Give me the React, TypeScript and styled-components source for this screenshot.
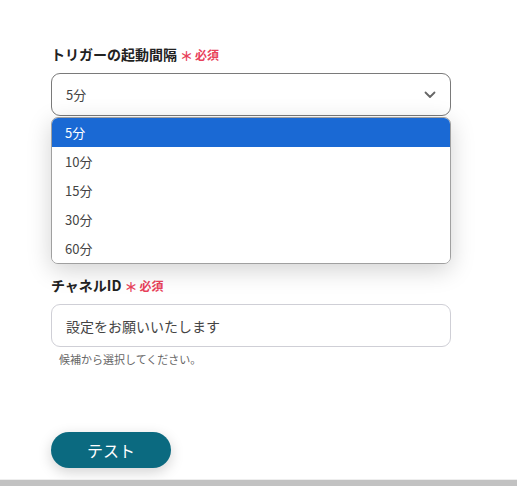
import React from "react";
import styled, { createGlobalStyle } from "styled-components";

const Global = createGlobalStyle`
  html, body { margin: 0; padding: 0; background: #fff; }
  body { font-family: "Noto Sans CJK JP", "Noto Sans", sans-serif; color: #333; }
`;

const Page = styled.div`
  width: 517px;
  height: 486px;
  display: flex;
  flex-direction: column;
  overflow: hidden;
`;

const Content = styled.div`
  flex: 1;
  padding: 44px 0 0 51px;
  display: flex;
  flex-direction: column;
`;

const Field = styled.div<{ $mb?: number }>`
  width: 400px;
  display: flex;
  flex-direction: column;
  position: relative;
  margin-bottom: ${(p) => p.$mb ?? 0}px;
`;

const Label = styled.div`
  display: flex;
  align-items: center;
  gap: 3px;
  font-size: 14px;
  font-weight: 700;
  color: #222;
  line-height: 21px;
  margin-bottom: 8px;
`;

const Required = styled.span`
  display: inline-flex;
  align-items: center;
  color: #e8415a;
  font-size: 12px;
  font-weight: 700;
  gap: 2px;
`;

const Star = styled.span`
  font-size: 13px;
  line-height: 1;
  margin-top: 2px;
`;

const Select = styled.div`
  height: 43px;
  box-sizing: border-box;
  border: 1px solid #7a7a7a;
  border-radius: 9px;
  display: flex;
  align-items: center;
  justify-content: space-between;
  padding: 0 14px 0 14px;
  font-size: 13px;
  color: #444;
  background: #fff;
`;

const Menu = styled.ul`
  position: absolute;
  left: 0;
  right: 0;
  top: 73px;
  margin: 0;
  padding: 0;
  list-style: none;
  background: #fff;
  border: 1px solid #a0a0a0;
  border-radius: 7px;
  overflow: hidden;
  box-shadow: 0 6px 24px rgba(0, 0, 0, 0.18);
  z-index: 5;
`;

const Option = styled.li<{ $active?: boolean }>`
  height: 29px;
  display: flex;
  align-items: center;
  padding-left: 13px;
  font-size: 13px;
  color: ${(p) => (p.$active ? "#fff" : "#444")};
  background: ${(p) => (p.$active ? "#1a69d4" : "#fff")};
`;

const Input = styled.div`
  height: 43px;
  box-sizing: border-box;
  border: 1px solid #cfcfd6;
  border-radius: 9px;
  display: flex;
  align-items: center;
  padding-left: 14px;
  font-size: 14px;
  color: #444;
`;

const Help = styled.div`
  font-size: 11px;
  color: #666;
  margin-top: 4px;
  padding-left: 8px;
  line-height: 16px;
`;

const Button = styled.button`
  width: 120px;
  height: 36px;
  border: none;
  border-radius: 18px;
  background: #0b6a80;
  color: #fff;
  font-family: inherit;
  font-size: 16px;
  box-shadow: 0 4px 14px rgba(0, 0, 0, 0.18);
  margin-top: 65px;
  cursor: pointer;
`;

const Bottom = styled.div`
  height: 6px;
  background: #c2c2c2;
  border-top: 1px solid #eeeeee;
`;

const Chevron = () => (
  <svg width="12" height="8" viewBox="0 0 12 8">
    <path d="M1.5 1.5 L6 6 L10.5 1.5" fill="none" stroke="#666" strokeWidth="1.8" strokeLinecap="round" strokeLinejoin="round" />
  </svg>
);

const options = ["5分", "10分", "15分", "30分", "60分"];

export default function App() {
  return (
    <>
      <Global />
      <Page>
        <Content>
          <Field $mb={159}>
            <Label>
              トリガーの起動間隔
              <Required>
                <Star>＊</Star>必須
              </Required>
            </Label>
            <Select>
              <span>5分</span>
              <Chevron />
            </Select>
            <Menu>
              {options.map((o, i) => (
                <Option key={o} $active={i === 0}>
                  {o}
                </Option>
              ))}
            </Menu>
          </Field>
          <Field>
            <Label>
              チャネルID
              <Required>
                <Star>＊</Star>必須
              </Required>
            </Label>
            <Input>設定をお願いいたします</Input>
            <Help>候補から選択してください。</Help>
          </Field>
          <div>
            <Button>テスト</Button>
          </div>
        </Content>
        <Bottom />
      </Page>
    </>
  );
}
